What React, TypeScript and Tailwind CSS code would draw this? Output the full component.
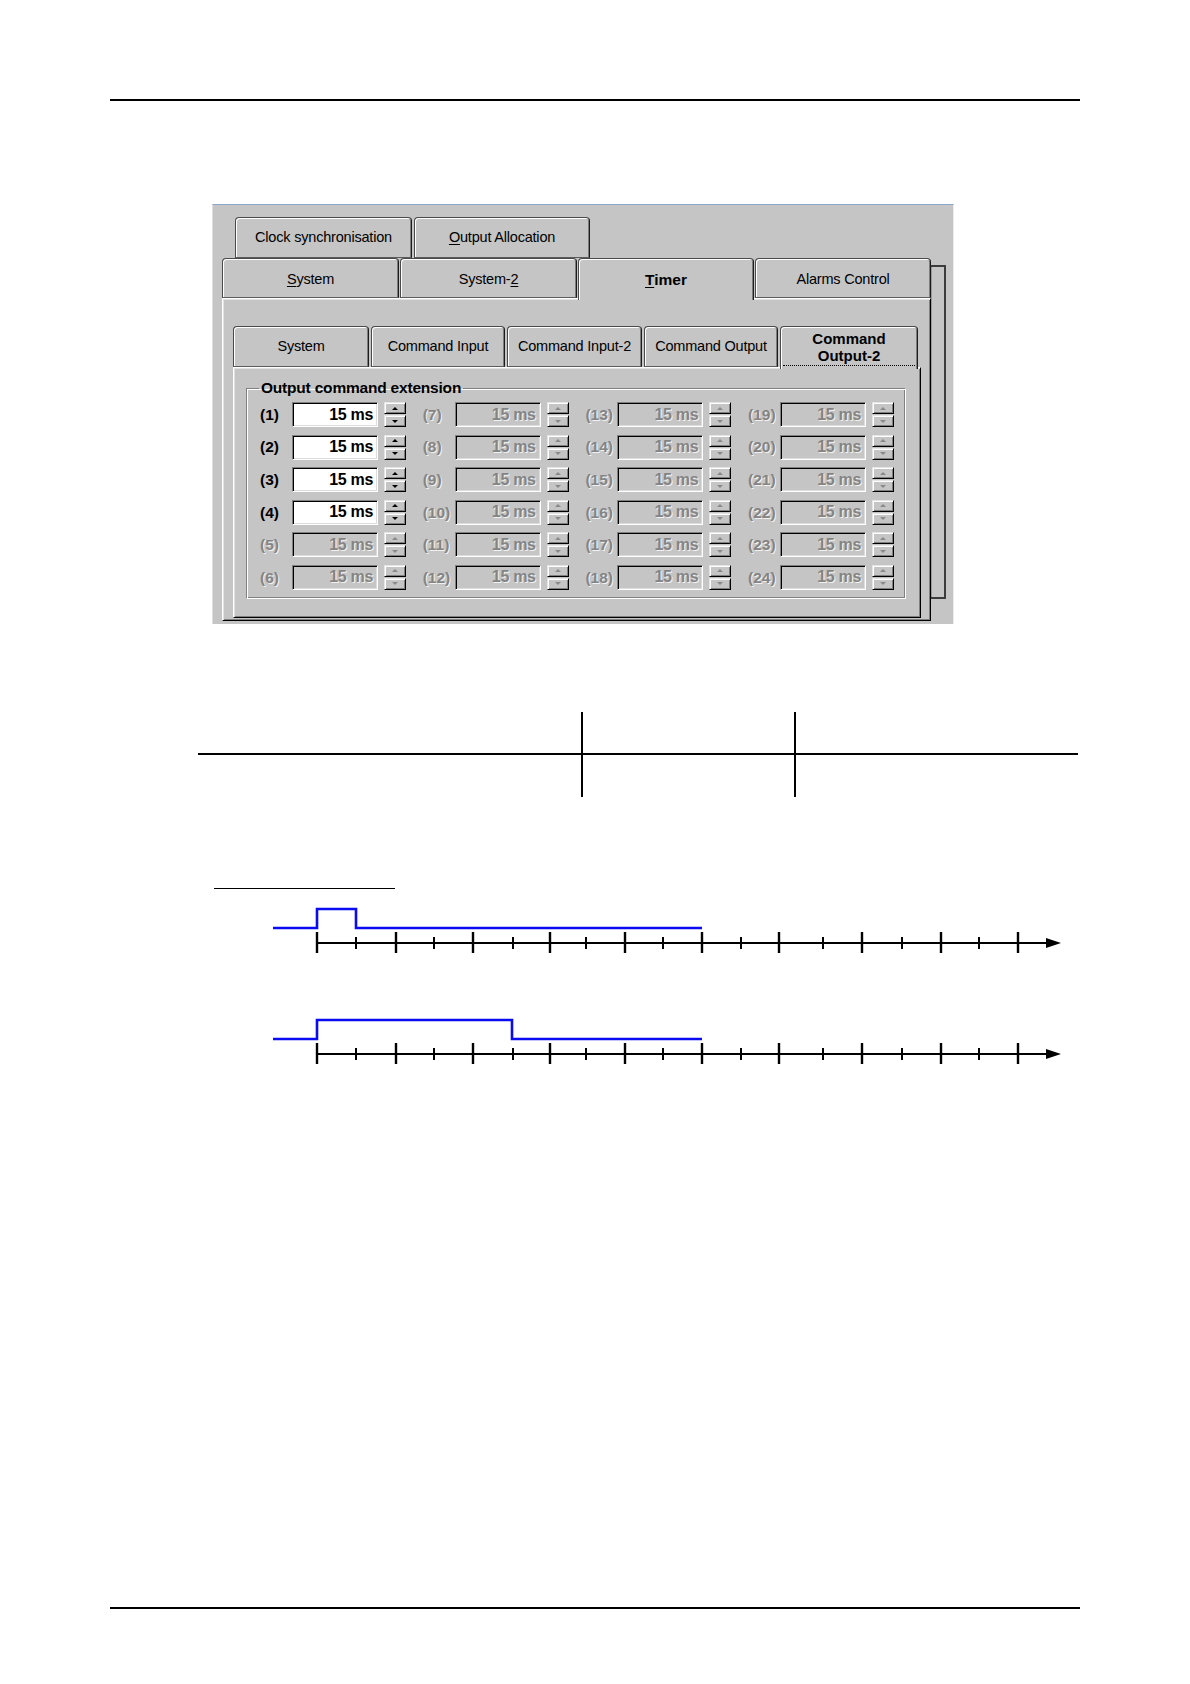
import React from 'react'

// Win9x style tab control + timing diagrams, page of a manual

type TabDef = { label: React.ReactNode; cls: string; selected?: boolean }

const acc = (ch: string) => <span className="underline underline-offset-[2px] decoration-1">{ch}</span>

const row1: TabDef[] = [
  { label: 'Clock synchronisation', cls: 'w-[177px] pt-[1px]' },
  { label: <>{acc('O')}utput Allocation</>, cls: 'w-[176px] pt-[1px]' },
]

const row2: TabDef[] = [
  { label: <>{acc('S')}ystem</>, cls: 'w-[177px] pt-[3px]' },
  { label: <>System-{acc('2')}</>, cls: 'w-[177px] pt-[3px]' },
  { label: <span className="font-bold text-[15.5px] tracking-normal">{acc('T')}imer</span>, cls: 'w-[176px] pt-[3px]', selected: true },
  { label: 'Alarms Control', cls: 'w-[176px] pt-[3px]' },
]

const innerTabs: TabDef[] = [
  { label: 'System', cls: 'w-[136px]' },
  { label: 'Command Input', cls: 'w-[134px]' },
  { label: 'Command Input-2', cls: 'w-[135px]' },
  { label: 'Command Output', cls: 'w-[134px]' },
]

function Tab({ label, cls, selected }: TabDef) {
  return (
    <div
      className={`${cls} ${
        selected ? 'h-[42px] pb-[2px] relative z-10' : 'h-full border-b border-b-[#5c5c5c]'
      } bg-[#c5c5c5] rounded-t-[4px] border-t border-l border-r border-t-[#4a4a4a] border-l-[#4a4a4a] border-r-[#1c1c1c] shadow-[inset_1px_1px_0_#ffffff,inset_-1px_0_0_#7c7c7c] flex items-center justify-center text-[14.5px] tracking-[-0.2px] text-black`}
    >
      {label}
    </div>
  )
}

function SpinBtn({ up, enabled }: { up?: boolean; enabled: boolean }) {
  const arrow = enabled
    ? up
      ? 'border-b-black'
      : 'border-t-black'
    : up
      ? 'border-b-[#8a8a8a]'
      : 'border-t-[#8a8a8a]'
  return (
    <div className="w-[22px] h-[12px] bg-[#c5c5c5] border border-t-[#e4e4e4] border-l-[#e4e4e4] border-b-black border-r-black shadow-[inset_1px_1px_0_#ffffff,inset_-1px_-1px_0_#808080] flex items-center justify-center">
      <div
        className={`w-0 h-0 border-l-[3px] border-r-[3px] border-l-transparent border-r-transparent ${
          up ? 'border-b-[3px]' : 'border-t-[3px]'
        } ${arrow}`}
      />
    </div>
  )
}

function SpinField({ n, enabled }: { n: number; enabled: boolean }) {
  const txt = enabled ? 'text-black' : 'text-[#848484] [text-shadow:1px_1px_0_#f2f2f2]'
  return (
    <div className="flex items-center w-[146px] h-[25px]">
      <span className={`w-[32px] font-bold text-[15.5px] ${txt}`}>({n})</span>
      <div
        className={`w-[86px] h-[25px] border border-t-[#808080] border-l-[#808080] border-b-white border-r-white shadow-[inset_1px_1px_0_#000000,inset_-1px_-1px_0_#dcdcdc] ${
          enabled ? 'bg-white' : 'bg-[#c5c5c5]'
        } flex items-center justify-end pr-[4px] font-bold text-[16px] tracking-[-0.3px] ${txt}`}
      >
        15 ms
      </div>
      <div className="ml-[6px] w-[22px] h-[25px] flex flex-col gap-[1px]">
        <SpinBtn up enabled={enabled} />
        <SpinBtn enabled={enabled} />
      </div>
    </div>
  )
}

function Dialog() {
  const rows = [0, 1, 2, 3, 4, 5]
  return (
    <div className="ml-[212px] w-[742px] h-[420px] overflow-hidden bg-[#c5c5c5] border-t border-t-[#8ea6cc] border-l border-l-[#dedede] border-r border-r-[#ececec] flex flex-col">
      {/* back row of tabs */}
      <div className="flex gap-[2px] pl-[22px] pt-[12px] h-[53px]">
        {row1.map((t, i) => (
          <Tab key={i} {...t} />
        ))}
      </div>

      <div className="flex pl-[9px]">
        <div className="w-[709px] flex flex-col">
          <div className="flex items-start gap-[1px] h-[40px]">
            {row2.map((t, i) => (
              <Tab key={i} {...t} />
            ))}
          </div>

          {/* Timer page */}
          <div className="h-[323px] border border-l-white border-t-white border-r-black border-b-black shadow-[inset_1px_1px_0_#e2e2e2,inset_-1px_-1px_0_#808080] pl-[10px] pt-[27px]">
            <div className="flex items-start gap-[2px] h-[41px]">
              {innerTabs.map((t, i) => (
                <Tab key={i} {...t} />
              ))}
              <div className="w-[138px] h-[43px] relative z-10 bg-[#c5c5c5] rounded-t-[4px] border-t border-l border-r border-t-[#4a4a4a] border-l-[#4a4a4a] border-r-[#1c1c1c] shadow-[inset_1px_1px_0_#ffffff,inset_-1px_0_0_#7c7c7c] flex flex-col items-center pt-[3px] font-bold text-[15px] leading-[17px] text-black">
                <span>Command</span>
                <span>Output-2</span>
                <div className="mt-[1px] w-[132px] border-b border-dotted border-black" />
              </div>
            </div>

            <div className="w-[688px] h-[251px] border border-l-white border-t-white border-r-black border-b-black shadow-[inset_1px_1px_0_#e2e2e2,inset_-1px_-1px_0_#808080] pl-[12px] pt-[11px]">
              <fieldset className="w-[660px] h-[220px] border border-t-[#808080] border-l-[#808080] border-b-white border-r-white shadow-[inset_1px_1px_0_#ffffff,inset_-1px_-1px_0_#808080] pl-[13px] pt-[5px]">
                <legend className="-ml-[1px] px-[2px] font-bold text-[15.5px] leading-[18px] tracking-[-0.2px] text-black">
                  Output command extension
                </legend>
                <div className="flex flex-col gap-[7.6px]">
                  {rows.map(r => (
                    <div key={r} className="flex gap-[16.7px]">
                      {[0, 1, 2, 3].map(c => {
                        const n = c * 6 + r + 1
                        return <SpinField key={c} n={n} enabled={n <= 4} />
                      })}
                    </div>
                  ))}
                </div>
              </fieldset>
            </div>
          </div>
        </div>
        <div className="w-[15px] h-[334px] mt-[7px] border-t-2 border-r-2 border-b-2 border-[#3c3c3c] shadow-[inset_1px_0_0_#9a9a9a]" />
      </div>
    </div>
  )
}

const TICKS = [317, 356, 396, 434, 473, 513, 550, 586, 625, 663, 702, 741, 779, 823, 862, 902, 941, 979, 1018]

function Axis({ y }: { y: number }) {
  return (
    <g stroke="#000">
      <line x1={317} y1={y} x2={1050} y2={y} strokeWidth={2.2} />
      {TICKS.map((x, i) => {
        const major = i % 2 === 0
        return (
          <line
            key={x}
            x1={x}
            x2={x}
            y1={major ? y - 11 : y - 6}
            y2={major ? y + 10 : y + 6}
            strokeWidth={major ? 2.4 : 2}
          />
        )
      })}
      <polygon points={`1046,${y - 5} 1061,${y} 1046,${y + 5}`} fill="#000" stroke="none" />
    </g>
  )
}

function Timing() {
  return (
    <svg className="mt-[11px] block" width={1190} height={175} viewBox="0 900 1190 175">
      <polyline
        points="273,928 317,928 317,909 356,909 356,928 702,928"
        fill="none"
        stroke="#0b0bf2"
        strokeWidth={2.6}
      />
      <Axis y={943} />
      <polyline
        points="273,1039 317,1039 317,1020 512,1020 512,1039 702,1039"
        fill="none"
        stroke="#0b0bf2"
        strokeWidth={2.6}
      />
      <Axis y={1054} />
    </svg>
  )
}

export default function App() {
  return (
    <div className="w-[1190px] h-[1684px] bg-white flex flex-col font-['Liberation_Sans',Arial,sans-serif]">
      <div className="mt-[99px] ml-[110px] w-[970px] h-[2px] bg-black" />

      <div className="mt-[103px]">
        <Dialog />
      </div>

      {/* empty table */}
      <div className="mt-[88px] ml-[198px] w-[880px] grid grid-cols-[383px_213px_284px]">
        <div className="h-[43px] border-b-2 border-black" />
        <div className="h-[43px] border-b-2 border-l-2 border-black" />
        <div className="h-[43px] border-b-2 border-l-2 border-black" />
        <div className="h-[42px]" />
        <div className="h-[42px] border-l-2 border-black" />
        <div className="h-[42px] border-l-2 border-black" />
      </div>

      <div className="mt-[91px] ml-[214px] w-[181px] h-px bg-black" />
      <Timing />

      <div className="mt-auto mb-[75px] ml-[110px] w-[970px] h-[2px] bg-black" />
    </div>
  )
}
